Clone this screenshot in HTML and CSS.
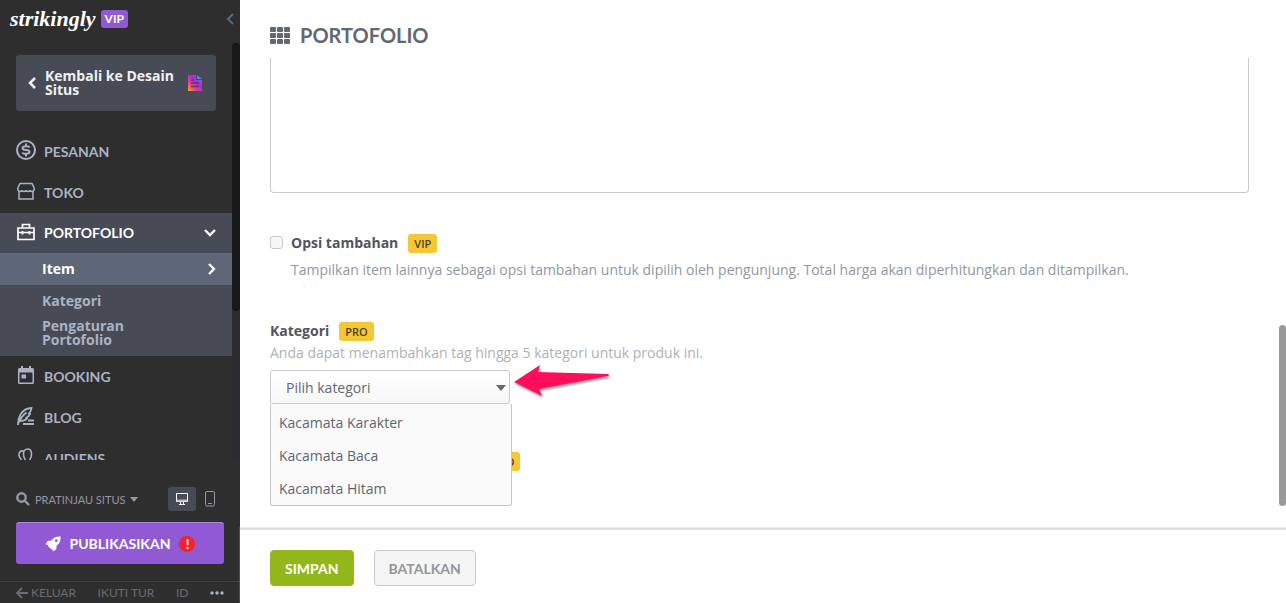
FILE: index.html
```html
<!DOCTYPE html>
<html lang="id">
    <head>
        <meta charset="utf-8">
        <title>Portofolio</title>
        <link rel="stylesheet" href="styles.css">
    </head>

    <body>
        <aside class="sidebar">
            <header class="brand">
                <a class="logo" href="#">strikingly</a>
                <span class="plan">VIP</span>
                <button class="collapse" aria-label="Tutup menu">
                    <svg width="8" height="12" viewBox="0 0 8 12"><path d="M7 1L2 6l5 5" fill="none" stroke="#5a6880" stroke-width="2"/></svg>
                </button>
            </header>

            <div class="scroller">
                <nav class="menu">
                    <a class="back" href="#">
                        <svg width="9" height="14" viewBox="0 0 9 14"><path d="M7 2L2 7l5 5" fill="none" stroke="#f0f1f4" stroke-width="2.5"/></svg>
                        <span>Kembali ke Desain Situs</span>
                        <svg width="16" height="16" viewBox="0 0 16 16">
                            <defs>
                                <linearGradient id="doc" x1="0" y1="1" x2="1" y2="0">
                                    <stop offset="0" stop-color="#fba51c"/>
                                    <stop offset=".3" stop-color="#e9408a"/>
                                    <stop offset=".6" stop-color="#b322e8"/>
                                    <stop offset="1" stop-color="#4a8cf0"/>
                                </linearGradient>
                            </defs>
                            <path d="M1 0h8v5h6v11H1z" fill="url(#doc)"/>
                            <path d="M10 0l5 4h-5z" fill="#5b7be0"/>
                            <path d="M4 5h3M4 8h8M4 11.500h8" stroke="#474b56" stroke-width="1.500"/>
                        </svg>
                    </a>

                    <a class="item" href="#">
                        <svg width="20" height="20" viewBox="0 0 20 20" fill="none" stroke="currentColor" stroke-width="2"><circle cx="10" cy="10" r="9"/><path d="M13.500 7.500c-.3-1-1.300-1.300-3.500-1.300s-3.500.4-3.500 1.800S8 10 10 10s3.500.6 3.500 2-1.500 1.800-3.500 1.800-3.200-.3-3.500-1.300M10 3.500v3M10 13.500v3"/></svg>
                        PESANAN
                    </a>
                    <a class="item" href="#">
                        <svg width="20" height="20" viewBox="0 0 20 20" fill="none" stroke="currentColor" stroke-width="1.500"><path d="M4 2.500h12l2.200 4.500c.3 2-.6 3.500-2.200 3.500-1.300 0-2-.6-2-1.500 0 1-.8 1.500-2 1.500s-2-.6-2-1.500c0 1-.8 1.500-2 1.500s-2-.6-2-1.500c0 .9-.7 1.500-2 1.500-1.600 0-2.500-1.500-2.200-3.500zM3 10v8h14v-8"/></svg>
                        TOKO
                    </a>
                    <a class="item open" href="#">
                        <svg width="20" height="20" viewBox="0 0 20 20" fill="none" stroke="currentColor" stroke-width="1.700"><path d="M2 6h16v11.500H2zM6.500 6V2.500h7V6M2 10.500h16M6.500 9v3.500M13.500 9v3.500"/></svg>
                        PORTOFOLIO
                        <svg class="mark" width="12" height="8" viewBox="0 0 12 8"><path d="M1 1l5 5 5-5" fill="none" stroke="currentColor" stroke-width="2.300"/></svg>
                    </a>
                    <div class="submenu">
                        <a class="current" href="#">Item
                            <svg class="mark" width="8" height="12" viewBox="0 0 8 12"><path d="M1 1l5 5-5 5" fill="none" stroke="currentColor" stroke-width="2.300"/></svg>
                        </a>
                        <a href="#">Kategori</a>
                        <a href="#">Pengaturan Portofolio</a>
                    </div>
                    <a class="item" href="#">
                        <svg width="20" height="20" viewBox="0 0 20 20"><path d="M4 3h1V1h2v2h6V1h2v2h1.500Q18 3 18 4.500v13q0 1.500-1.500 1.500h-13Q2 19 2 17.500v-13Q2 3 3.500 3zM3.500 7.500v10h13v-10z" fill="currentColor" fill-rule="evenodd"/><path d="M5.500 9.500h4.500v4H5.500z" fill="currentColor"/></svg>
                        BOOKING
                    </a>
                    <a class="item" href="#">
                        <svg width="20" height="20" viewBox="0 0 20 20" fill="none" stroke="currentColor" stroke-width="1.800"><path d="M2 19c0-4 .5-7 2.500-10.500C7 4.500 10.500 2 15.500 2c-.3 2.500-1 4-2.500 5.500l1 .5c-1 2-2 3-3.500 3.500l.5 1c-2 2-4 2.500-7.500 2.500M2.500 17c1.500-4 4-7.500 8-10.500M12 14.500h6M7 18h11"/></svg>
                        BLOG
                    </a>
                    <a class="item" href="#">
                        <svg width="20" height="20" viewBox="0 0 20 20" fill="none" stroke="currentColor" stroke-width="1.600"><path d="M9 15V12C8 11 7.500 9 7.500 7c0-3 1.500-5 4-5s4 2 4 5c0 2-.5 4-1.500 5v3M7.500 4C4.500 3.500 2.500 5.500 3 8.500c.2 1.500 1 2.500 2 3.500v3"/></svg>
                        AUDIENS
                    </a>
                </nav>
                <div class="rail"><div class="thumb"></div></div>
            </div>

            <div class="preview">
                <button class="site">
                    <svg width="14" height="14" viewBox="0 0 14 14" fill="none" stroke="currentColor" stroke-width="2.400"><circle cx="5.500" cy="5.500" r="4.200"/><path d="M8.500 8.500l4.500 4.500"/></svg>
                    PRATINJAU SITUS
                    <svg width="8" height="5" viewBox="0 0 8 5"><path d="M0 0h8L4 5z" fill="currentColor"/></svg>
                </button>
                <button class="device on" aria-label="Desktop">
                    <svg width="14" height="14" viewBox="0 0 14 14"><path d="M1.500 1.500h11v8h-11z" fill="none" stroke="#fff"/><path d="M2 7.500h10v2H2z" fill="#b5b9c1"/><path d="M5.500 10v2.500M8.500 10v2.500M4 12.500h6" stroke="#fff"/></svg>
                </button>
                <button class="device" aria-label="Ponsel">
                    <svg width="10" height="16" viewBox="0 0 10 16" fill="none" stroke="#9299a4"><rect x=".5" y=".5" width="9" height="14.500" rx="1.500"/><path d="M3 12.500h4"/></svg>
                </button>
            </div>

            <button class="publish">
                <svg width="16" height="16" viewBox="0 0 16 16"><path d="M15.500.5C11 .3 8.500 1.500 6.500 4.500L2.500 5 .5 8.500l3.500.5L7.500 12.300l.3 3.200 3.400-2 .5-4c3-2 4.100-4.500 3.800-9z" fill="#fff"/><circle cx="11.300" cy="4.700" r="1.400" fill="#9159d4"/><path d="M3.500 8l5 5-2 .5L3 10z" fill="#fff"/></svg>
                PUBLIKASIKAN
                <span class="alert">!</span>
            </button>

            <footer class="foot">
                <a href="#"><svg width="12" height="12" viewBox="0 0 12 12"><path d="M6 1L1 6l5 5M1 6h11" fill="none" stroke="currentColor" stroke-width="1.800"/></svg>KELUAR</a>
                <a href="#">IKUTI TUR</a>
                <a href="#">ID</a>
                <a href="#" aria-label="Lainnya"><svg width="14" height="4" viewBox="0 0 14 4" fill="#aab2c0"><circle cx="2" cy="2" r="1.700"/><circle cx="7" cy="2" r="1.700"/><circle cx="12" cy="2" r="1.700"/></svg></a>
            </footer>
        </aside>

        <main class="panel">
            <header class="title">
                <svg width="20" height="17" viewBox="0 0 20 17" fill="#636972"><rect width="6" height="5" rx="1"/><rect x="7" width="6" height="5" rx="1"/><rect x="14" width="6" height="5" rx="1"/><rect y="6" width="6" height="5" rx="1"/><rect x="7" y="6" width="6" height="5" rx="1"/><rect x="14" y="6" width="6" height="5" rx="1"/><rect y="12" width="6" height="5" rx="1"/><rect x="7" y="12" width="6" height="5" rx="1"/><rect x="14" y="12" width="6" height="5" rx="1"/></svg>
                <h1>PORTOFOLIO</h1>
            </header>

            <div class="form">
                <textarea class="description" aria-label="Deskripsi"></textarea>

                <section class="addon">
                    <input type="checkbox" id="addon">
                    <div>
                        <div class="heading"><label for="addon">Opsi tambahan</label><span class="badge">VIP</span></div>
                        <p>Tampilkan item lainnya sebagai opsi tambahan untuk dipilih oleh pengunjung. Total harga akan diperhitungkan dan ditampilkan.</p>
                    </div>
                </section>

                <section class="category">
                    <div class="heading"><label for="category">Kategori</label><span class="badge">PRO</span></div>
                    <p>Anda dapat menambahkan tag hingga 5 kategori untuk produk ini.</p>
                    <div class="picker">
                        <select id="category"><option>Pilih kategori</option></select>
                        <svg class="caret" width="10" height="6" viewBox="0 0 10 6"><path d="M0 0h10L5 6z" fill="#636972"/></svg>
                        <ul class="options">
                            <li>Kacamata Karakter</li>
                            <li>Kacamata Baca</li>
                            <li>Kacamata Hitam</li>
                        </ul>
                        <svg class="pointer" width="102" height="40" viewBox="0 0 102 40"><path d="M2 20L28 3l-2 7 70 2q2 1 0 2L27 27l3 7z" fill="#ff0f5b"/></svg>
                    </div>
                </section>

                <div class="next"><span class="badge">PRO</span></div>
                <div class="bar"></div>
            </div>

            <footer class="actions">
                <button class="save">SIMPAN</button>
                <button class="cancel">BATALKAN</button>
            </footer>
        </main>
    </body>
</html>
```
FILE: styles.css
```css
*{box-sizing: border-box;}
body{margin: 0;display: flex;height: 100vh;overflow: hidden;background: #fff;font: 14px/20px "Open Sans", "Noto Sans", sans-serif;color: #50555c;}
a{color: inherit;text-decoration: none;}
button{border: 0;padding: 0;background: none;color: inherit;font-family: Lato, sans-serif;cursor: pointer;}
svg{display: block;flex: none;}
h1,p,ul{margin: 0;padding: 0;}

/* sidebar */
.sidebar{width: 240px;flex: none;display: flex;flex-direction: column;background: #2e2e2e;color: #aab3c3;font-family: Lato, sans-serif;}
.brand{display: flex;align-items: center;height: 38px;flex: none;margin-bottom: 5px;padding: 0 6px 0 10px;}
.logo{color: #fff;font: italic bold 22px/28px "Liberation Serif", serif;}
.plan{margin-left: 5px;padding: 0 4px;border-radius: 3px;background: #9159d4;color: #fff;font-size: 12px;font-weight: 700;line-height: 18px;}
.collapse{margin-left: auto;}
.scroller{flex: 1;min-height: 0;display: flex;overflow: hidden;}
.menu{flex: 1;}
.rail{width: 8px;background: #2b2b30;}
.thumb{height: 268px;border-radius: 4px;background: #17181a;}
.back{display: flex;align-items: center;gap: 8px;height: 56px;margin: 12px 16px 20px;padding: 0 13px 0 12px;border-radius: 3px;background: #474b56;color: #f0f1f4;font: bold 14px/14px "Open Sans", sans-serif;}
.back span{flex: 1;}
.item{display: flex;align-items: center;gap: 8px;height: 41px;padding: 0 16px;font-size: 14px;font-weight: 700;}
.item svg:first-child{margin-bottom: 3px;}
.item.open{height: 40px;background: #474b56;color: #fff;}
.mark{margin-left: auto;}
.submenu{padding-bottom: 9px;background: #474b56;font: bold 14px/14px "Open Sans", sans-serif;}
.submenu a{display: flex;align-items: center;padding: 0 90px 0 42px;margin-top: 9px;}
.submenu a + a + a{margin-top: 11px;}
.submenu .current{height: 32px;margin: 0;padding-right: 16px;background: #5e6778;color: #fff;}

.preview{display: flex;align-items: center;margin: 27px 16px 11px;}
.site{display: flex;align-items: center;gap: 5px;margin-right: auto;font-size: 11px;color: #9299a4;}
.device{display: grid;place-items: center;width: 28px;height: 24px;border-radius: 3px;}
.device.on{background: #474b56;}
.publish{display: flex;align-items: center;justify-content: center;gap: 9px;height: 42px;flex: none;margin: 0 16px 17px;border-top: 1px solid #ae82e3;border-radius: 3px;background: #9159d4;color: #fff;font-size: 14px;font-weight: 700;}
.alert{width: 16px;border-radius: 50%;background: #f5222d;font-size: 13px;font-weight: 900;line-height: 16px;}
.foot{display: flex;align-items: center;justify-content: space-between;height: 22px;padding: 1px 16px 0;border-top: 1px solid #414141;color: #686c73;font-size: 12px;}
.foot a{display: flex;align-items: center;gap: 3px;}

/* main panel */
.panel{flex: 1;min-width: 0;display: flex;flex-direction: column;}
.title{display: flex;align-items: center;gap: 10px;height: 58px;flex: none;padding: 12px 30px 0;}
h1{color: #636972;font: bold 20px/24px Lato, sans-serif;}
.form{position: relative;flex: 1;min-height: 0;overflow: hidden;padding: 0 37px 0 30px;}
.description{display: block;width: 100%;height: 135px;border: 1px solid #c8cacc;border-top: 0;border-radius: 0 0 4px 4px;resize: none;}
.heading{display: flex;align-items: center;gap: 10px;font-weight: 700;}
.badge{padding: 0 6px;border-radius: 3px;background: #f4c737;color: #4b4226;font: 600 11px/19px "Open Sans", sans-serif;}
.addon{display: flex;gap: 8px;margin-top: 40px;}
.addon input{appearance: none;flex: none;width: 13px;height: 13px;margin: 3px 0;border: 1px solid #c8cacc;border-radius: 3px;background: #f6f6f6;}
.addon p{margin-top: 7px;color: #92979f;}
.category{margin-top: 41px;}
.category p{margin-top: 2px;color: #aeb2b6;}
.picker{position: relative;width: 240px;margin-top: 7px;}
.picker select{appearance: none;display: block;width: 100%;height: 34px;padding: 1px 15px 0;border: 1px solid #c8cacc;border-radius: 3px;background: linear-gradient(#fff, #f7f7f7);color: #636972;font: inherit;}
.caret{position: absolute;right: 4px;top: 15px;}
.options{position: absolute;top: 34px;left: 0;z-index: 1;width: 242px;padding: 2px 0 0;border: 1px solid #c4c6c8;border-top: 0;border-radius: 0 0 3px 3px;background: #fafafa;color: #5d666f;list-style: none;}
.options li{padding: 0 8px;line-height: 33px;}
.pointer{position: absolute;left: 242px;top: -8px;filter: drop-shadow(1px 2px 1px #0006);}
.next{display: flex;margin-top: 48px;padding-left: 216px;}
.bar{position: absolute;right: 0;bottom: 22px;width: 7px;height: 181px;border-radius: 4px;background: #999;}
.actions{display: flex;gap: 20px;padding: 20px 30px 17px;border-top: 2px solid #dedede;box-shadow: 0 -1px 1px #f0f0f0;}
.actions button{height: 36px;padding: 0 14px;border: 1px solid #c8cacc;border-radius: 4px;font-size: 14px;font-weight: 700;}
.actions .save{border-color: #93b719;background: #93b719;color: #fff;}
.actions .cancel{background: #f5f5f5;color: #929599;}
```
